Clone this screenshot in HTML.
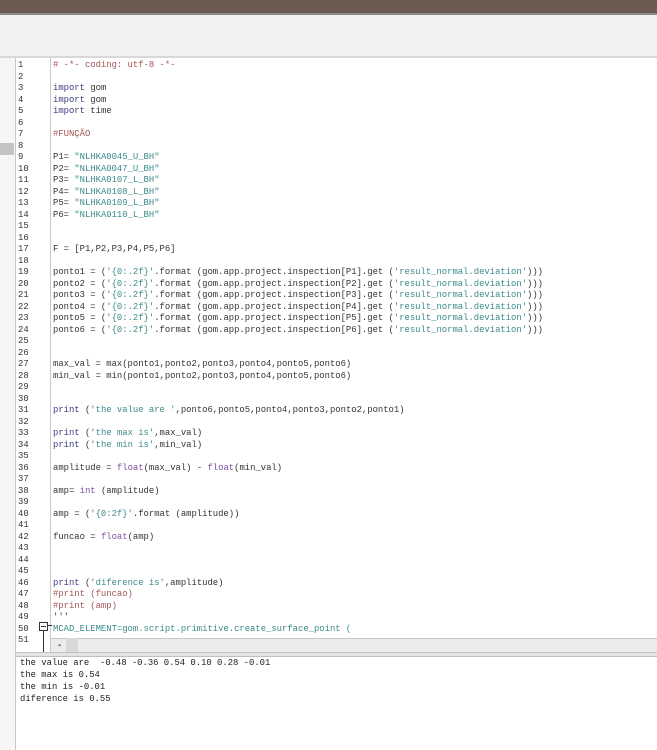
<!DOCTYPE html>
<html><head><meta charset="utf-8"><style>
body{margin:0;width:657px;height:750px;overflow:hidden;background:#fff;position:relative;font-family:"Liberation Mono",monospace}
.top{position:absolute;left:0;top:0;width:657px;height:13px;background:#6b5b50}
.top2{position:absolute;left:0;top:13px;width:657px;height:2px;background:#8a8a8a}
.band{position:absolute;left:0;top:15px;width:657px;height:41px;background:#f1f1f1}
.bline{position:absolute;left:0;top:56px;width:657px;height:2px;background:#d8d8d8}
.lstrip{position:absolute;left:0;top:58px;width:15px;height:692px;background:#f6f6f6;border-right:1px solid #c8c8c8}
.gblk{position:absolute;left:0;top:143px;width:14px;height:12px;background:#c4c4c4}
.gut{position:absolute;left:17px;top:58px;width:33px;height:595px;border-right:1px solid #c8c8c8;background:#fff}
pre{margin:0;position:absolute;font-size:8.9px;line-height:11.5px;color:#333;font-family:"Liberation Mono",monospace}
.nums{left:18px;top:60px;color:#333}
.code{left:53px;top:60px}
.k{color:#3a3a80}.s{color:#3c8a8a}.c{color:#a05555}.f{color:#8050a0}
.hs{position:absolute;left:51px;top:638px;width:606px;height:14px;background:#ececec;border-top:1px solid #c8c8c8}
.hs span{position:absolute;top:2px;font-size:7px;color:#666}
.hsb{position:absolute;left:66px;top:638px;width:12px;height:14px;background:#d8d8d8}
.split{position:absolute;left:16px;top:652px;width:641px;height:3px;background:#e4e4e4;border-top:1px solid #c0c0c0;border-bottom:1px solid #c0c0c0}
.out{left:20px;top:657px;line-height:12px;color:#222}
.fold{position:absolute;left:39px;top:622px;width:7px;height:7px;border:1px solid #333;background:#fff}
.fold:after{content:"";position:absolute;left:1px;top:3px;width:5px;height:1px;background:#333}
.fv{position:absolute;left:43px;top:630px;width:1px;height:22px;background:#333}
.fh{position:absolute;left:47px;top:625px;width:5px;height:1px;background:#333}
</style></head><body>
<div class="top"></div><div class="top2"></div><div class="band"></div><div class="bline"></div>
<div class="lstrip"></div><div class="gblk"></div>
<div class="gut"></div>
<pre class="nums">1
2
3
4
5
6
7
8
9
10
11
12
13
14
15
16
17
18
19
20
21
22
23
24
25
26
27
28
29
30
31
32
33
34
35
36
37
38
39
40
41
42
43
44
45
46
47
48
49
50
51</pre>
<pre class="code"><span class="c"># -*- coding: utf-8 -*-</span>

<span class="k">import</span> gom
<span class="k">import</span> gom
<span class="k">import</span> time

<span class="c">#FUNÇÃO</span>

P1= <span class="s">"NLHKA0045_U_BH"</span>
P2= <span class="s">"NLHKA0047_U_BH"</span>
P3= <span class="s">"NLHKA0107_L_BH"</span>
P4= <span class="s">"NLHKA0108_L_BH"</span>
P5= <span class="s">"NLHKA0109_L_BH"</span>
P6= <span class="s">"NLHKA0110_L_BH"</span>


F = [P1,P2,P3,P4,P5,P6]

ponto1 = (<span class="s">'{0:.2f}'</span>.format (gom.app.project.inspection[P1].get (<span class="s">'result_normal.deviation'</span>)))
ponto2 = (<span class="s">'{0:.2f}'</span>.format (gom.app.project.inspection[P2].get (<span class="s">'result_normal.deviation'</span>)))
ponto3 = (<span class="s">'{0:.2f}'</span>.format (gom.app.project.inspection[P3].get (<span class="s">'result_normal.deviation'</span>)))
ponto4 = (<span class="s">'{0:.2f}'</span>.format (gom.app.project.inspection[P4].get (<span class="s">'result_normal.deviation'</span>)))
ponto5 = (<span class="s">'{0:.2f}'</span>.format (gom.app.project.inspection[P5].get (<span class="s">'result_normal.deviation'</span>)))
ponto6 = (<span class="s">'{0:.2f}'</span>.format (gom.app.project.inspection[P6].get (<span class="s">'result_normal.deviation'</span>)))


max_val = max(ponto1,ponto2,ponto3,ponto4,ponto5,ponto6)
min_val = min(ponto1,ponto2,ponto3,ponto4,ponto5,ponto6)


<span class="k">print</span> (<span class="s">'the value are '</span>,ponto6,ponto5,ponto4,ponto3,ponto2,ponto1)

<span class="k">print</span> (<span class="s">'the max is'</span>,max_val)
<span class="k">print</span> (<span class="s">'the min is'</span>,min_val)

amplitude = <span class="f">float</span>(max_val) - <span class="f">float</span>(min_val)

amp= <span class="f">int</span> (amplitude)

amp = (<span class="s">'{0:2f}'</span>.format (amplitude))

funcao = <span class="f">float</span>(amp)



<span class="k">print</span> (<span class="s">'diference is'</span>,amplitude)
<span class="c">#print (funcao)</span>
<span class="c">#print (amp)</span>
'''
<span class="s">MCAD_ELEMENT=gom.script.primitive.create_surface_point (</span></pre>
<div class="fold"></div><div class="fv"></div><div class="fh"></div>
<div class="hs"><span style="left:6px">◂</span></div><div class="hsb"></div>
<div class="split"></div>
<pre class="out">the value are  -0.48 -0.36 0.54 0.10 0.28 -0.01
the max is 0.54
the min is -0.01
diference is 0.55</pre>
</body></html>
